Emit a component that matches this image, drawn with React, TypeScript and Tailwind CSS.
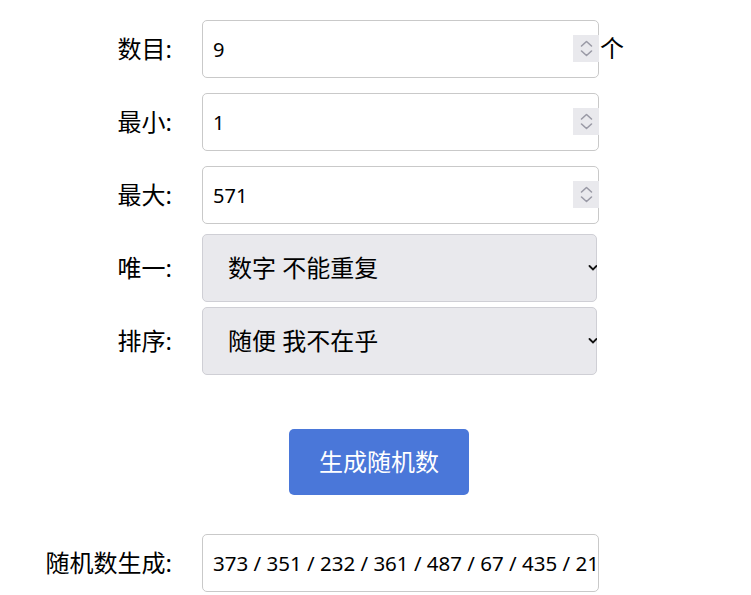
import React from 'react';

const font = { fontFamily: '"Noto Sans", "Noto Sans CJK SC", sans-serif' };

const Spinner: React.FC = () => (
  <span className="absolute right-0 top-[15px] flex h-[27px] w-[26px] flex-col items-center justify-center bg-[#e9e9ed]">
    <svg width="13" height="21" viewBox="0 0 13 21" fill="none" stroke="#9a9aa6" strokeWidth="1.6" strokeLinecap="round" strokeLinejoin="round">
      <path d="M1.5 8 L6.5 3.5 L11.5 8" />
      <path d="M1.5 13 L6.5 17.5 L11.5 13" />
    </svg>
  </span>
);

const Label: React.FC<{ text: string }> = ({ text }) => (
  <div className="w-[172px] shrink-0 text-right text-[24px] leading-none text-black">{text}</div>
);

const NumberRow: React.FC<{ label: string; value: string; unit?: string; className?: string }> = ({ label, value, unit, className }) => (
  <div className={`flex items-center ${className ?? ''}`}>
    <Label text={label} />
    <div className="relative ml-[30px] h-[58px] w-[397px]">
      <input
        readOnly
        value={value}
        className="h-full w-full rounded-[5px] border border-[#c9c9c9] bg-white pl-[10px] text-[20px] text-black outline-none"
        style={font}
      />
      <Spinner />
    </div>
    {unit && <span className="ml-[1px] -mt-[2px] text-[24px] leading-none text-black">{unit}</span>}
  </div>
);

const SelectRow: React.FC<{ label: string; value: string; className?: string }> = ({ label, value, className }) => (
  <div className={`flex items-center ${className ?? ''}`}>
    <Label text={label} />
    <div className="relative ml-[30px] h-[68px] w-[395px]">
      <select
        value={value}
        onChange={() => {}}
        className="h-full w-full appearance-none rounded-[5px] border border-[#cfcfd5] bg-[#e9e9ed] pl-[25px] text-[24px] text-black outline-none"
        style={font}
      >
        <option>{value}</option>
      </select>
      <svg className="pointer-events-none absolute right-0 top-[30px]" width="9" height="8" viewBox="0 0 9 8" fill="none" stroke="#111" strokeWidth="1.8" strokeLinecap="round">
        <path d="M1.5 2 L5 5.5 L8.5 2" />
      </svg>
    </div>
  </div>
);

export default function App() {
  return (
    <div className="h-[595px] w-[751px] overflow-hidden bg-white" style={font}>
      <div className="flex flex-col pt-[20px]">
        <NumberRow label="数目:" value="9" unit="个" />
        <NumberRow label="最小:" value="1" className="mt-[15px]" />
        <NumberRow label="最大:" value="571" className="mt-[15px]" />
        <SelectRow label="唯一:" value="数字 不能重复" className="mt-[10px]" />
        <SelectRow label="排序:" value="随便 我不在乎" className="mt-[5px]" />
        <div className="mt-[54px] flex">
          <button
            className="ml-[289px] h-[66px] w-[180px] rounded-[5px] bg-[#4a77d9] text-[24px] text-white"
            style={font}
          >
            生成随机数
          </button>
        </div>
        <div className="mt-[39px] flex items-center">
          <Label text="随机数生成:" />
          <input
            readOnly
            value="373 / 351 / 232 / 361 / 487 / 67 / 435 / 213 / 98"
            className="ml-[30px] h-[58px] w-[397px] rounded-[5px] border border-[#c9c9c9] bg-white pl-[10px] text-[20.5px] text-black outline-none"
            style={font}
          />
        </div>
      </div>
    </div>
  );
}
